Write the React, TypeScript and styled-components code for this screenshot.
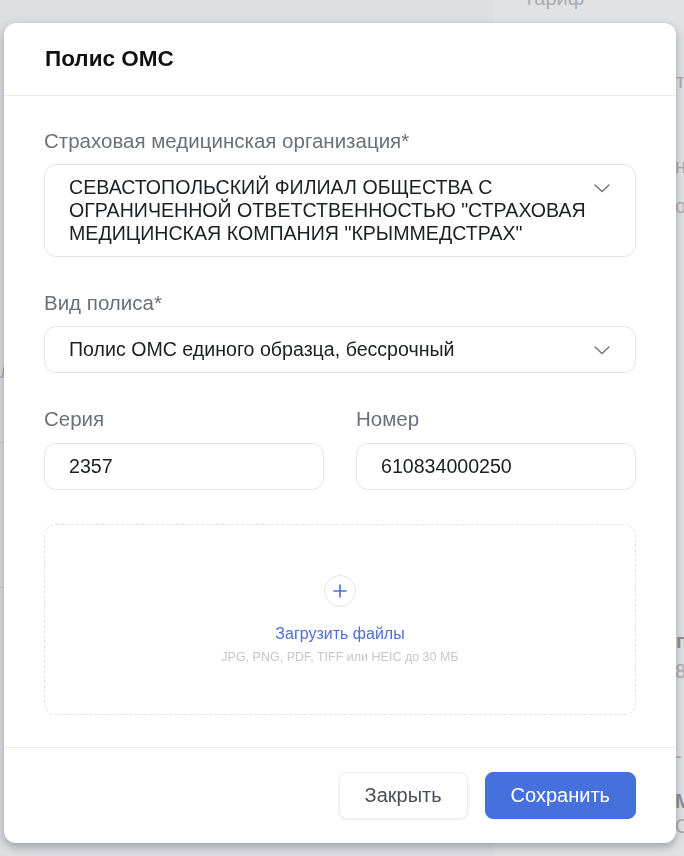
import React from "react";
import styled, { createGlobalStyle } from "styled-components";

const GlobalStyle = createGlobalStyle`
  html, body {
    margin: 0;
    padding: 0;
    background: #dcdee2;
    font-family: "Liberation Sans", Arial, sans-serif;
    overflow: hidden;
  }
  * { box-sizing: border-box; }
`;

// faint page behind the overlay
const Backdrop = styled.div`
  width: 684px;
  height: 856px;
  display: grid;
  grid-template-columns: 493px 1fr;
  color: #a9acb2;
  font-size: 20px;
`;

const BackLeft = styled.div`
  display: flex;
  flex-direction: column;
  padding-top: 360px;
`;

const BackRule = styled.div<{ $top: number }>`
  height: 1px;
  background: #c4c6cb;
  margin-top: ${(p) => p.$top}px;
`;

const BackRight = styled.div`
  background: #e0e2e5;
  display: flex;
  flex-direction: column;
`;

const BackText = styled.div<{ $top: number; $left: number; $bold?: boolean }>`
  margin-top: ${(p) => p.$top}px;
  padding-left: ${(p) => p.$left}px;
  font-weight: ${(p) => (p.$bold ? 700 : 400)};
  color: ${(p) => (p.$bold ? "#8d9096" : "#a9acb2")};
  white-space: nowrap;
  line-height: 22px;
`;

const Modal = styled.div`
  position: fixed;
  top: 23px;
  left: 4px;
  width: 672px;
  height: 820px;
  background: #fff;
  border-radius: 12px;
  box-shadow: 0 4px 10px rgba(40, 44, 52, 0.35);
  display: flex;
  flex-direction: column;
  overflow: hidden;
`;

const Header = styled.div`
  flex: none;
  height: 73px;
  padding: 0 40px 0 41px;
  display: flex;
  align-items: center;
  border-bottom: 1px solid #e8eaed;
`;

const Title = styled.h2`
  margin: 0;
  font-size: 22.5px;
  font-weight: 700;
  color: #111;
`;

const Body = styled.div`
  flex: 1;
  padding: 33px 40px 0;
  display: flex;
  flex-direction: column;
  gap: 34px;
  border-bottom: 1px solid #e8eaed;
`;

const Field = styled.div<{ $gap?: number }>`
  display: flex;
  flex-direction: column;
  gap: ${(p) => p.$gap ?? 12}px;
  min-width: 0;
`;

const Row = styled.div`
  display: grid;
  grid-template-columns: 1fr 1fr;
  gap: 32px;
`;

const Label = styled.label`
  font-size: 20.5px;
  line-height: 23px;
  color: #6b707a;
`;

const Box = styled.div`
  border: 1px solid #e3e5e9;
  border-radius: 12px;
  padding: 11px 25px 11px 24px;
  font-size: 19.6px;
  line-height: 23px;
  color: #1c1f24;
  display: flex;
  align-items: flex-start;
  justify-content: space-between;
`;

const Value = styled.span`
  flex: 1;
  min-width: 0;
`;

const Chevron = styled.svg`
  flex: none;
  margin-top: 8px;
`;

const Upload = styled.div`
  height: 191px;
  border: 1px dashed #e0e2e6;
  border-radius: 12px;
  display: flex;
  flex-direction: column;
  align-items: center;
  padding-top: 50px;
`;

const PlusCircle = styled.div`
  width: 32px;
  height: 32px;
  border-radius: 50%;
  border: 1px solid #e3e5e9;
  display: flex;
  align-items: center;
  justify-content: center;
`;

const UploadLink = styled.div`
  margin-top: 17px;
  font-size: 16px;
  line-height: 20px;
  color: #4a6fd6;
`;

const UploadHint = styled.div`
  margin-top: 6px;
  font-size: 12.5px;
  line-height: 15px;
  color: #c4c7cc;
`;

const Footer = styled.div`
  flex: none;
  padding: 24px 40px 24px;
  display: flex;
  justify-content: flex-end;
  gap: 17px;
`;

const Button = styled.button<{ $primary?: boolean }>`
  height: 47px;
  padding: 0 25px;
  border-radius: 8px;
  font-family: inherit;
  font-size: 20px;
  font-weight: 400;
  cursor: pointer;
  border: 1px solid ${(p) => (p.$primary ? "#4670db" : "#eceef1")};
  background: ${(p) => (p.$primary ? "#4670db" : "#fff")};
  color: ${(p) => (p.$primary ? "#fff" : "#4a4e5a")};
  box-shadow: ${(p) => (p.$primary ? "none" : "0 1px 3px rgba(0,0,0,0.08)")};
`;

const ChevronIcon = () => (
  <Chevron width="16" height="9" viewBox="0 0 16 9" fill="none">
    <path d="M1 1l7 6.5L15 1" stroke="#72767f" strokeWidth="1.5" strokeLinecap="round" strokeLinejoin="round" />
  </Chevron>
);

export default function App() {
  return (
    <>
      <GlobalStyle />
      <Backdrop>
        <BackLeft>
          <BackText $top={0} $left={0}>л</BackText>
          <BackRule $top={60} />
          <BackRule $top={144} />
        </BackLeft>
        <BackRight>
          <BackText $top={-13} $left={30}>Тариф</BackText>
          <BackText $top={61} $left={183}>т</BackText>
          <BackText $top={63} $left={182}>н</BackText>
          <BackText $top={18} $left={182}>о</BackText>
          <BackText $top={413} $left={183} $bold>п</BackText>
          <BackText $top={8} $left={182}>8</BackText>
          <BackText $top={63} $left={182}>-</BackText>
          <BackText $top={23} $left={182} $bold>М</BackText>
          <BackText $top={3} $left={182}>О</BackText>
        </BackRight>
      </Backdrop>

      <Modal>
        <Header>
          <Title>Полис ОМС</Title>
        </Header>
        <Body>
          <Field>
            <Label>Страховая медицинская организация*</Label>
            <Box>
              <Value>
                СЕВАСТОПОЛЬСКИЙ ФИЛИАЛ ОБЩЕСТВА С ОГРАНИЧЕННОЙ ОТВЕТСТВЕННОСТЬЮ "СТРАХОВАЯ МЕДИЦИНСКАЯ КОМПАНИЯ "КРЫММЕДСТРАХ"
              </Value>
              <ChevronIcon />
            </Box>
          </Field>
          <Field>
            <Label>Вид полиса*</Label>
            <Box>
              <Value>Полис ОМС единого образца, бессрочный</Value>
              <ChevronIcon />
            </Box>
          </Field>
          <Row>
            <Field $gap={13}>
              <Label>Серия</Label>
              <Box>2357</Box>
            </Field>
            <Field $gap={13}>
              <Label>Номер</Label>
              <Box>610834000250</Box>
            </Field>
          </Row>
          <Upload>
            <PlusCircle>
              <svg width="14" height="14" viewBox="0 0 14 14" fill="none">
                <path d="M7 1v12M1 7h12" stroke="#4a6fd6" strokeWidth="1.6" strokeLinecap="round" />
              </svg>
            </PlusCircle>
            <UploadLink>Загрузить файлы</UploadLink>
            <UploadHint>JPG, PNG, PDF, TIFF или HEIC до 30 МБ</UploadHint>
          </Upload>
        </Body>
        <Footer>
          <Button>Закрыть</Button>
          <Button $primary>Сохранить</Button>
        </Footer>
      </Modal>
    </>
  );
}
